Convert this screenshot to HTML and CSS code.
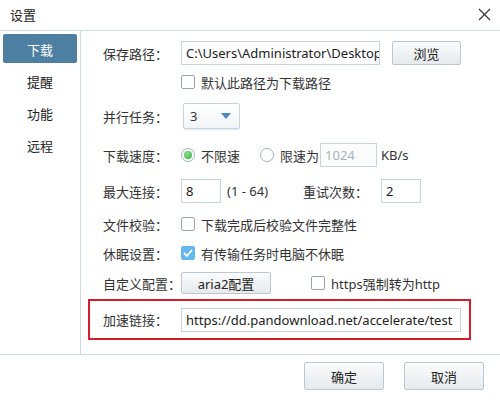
FILE: index.html
```html
<!DOCTYPE html>
<html lang="zh-CN">
<head>
<meta charset="utf-8">
<title>设置</title>
<link rel="stylesheet" href="styles.css">
</head>
<body>
<div class="dialog">
  <div class="titlebar">
    <span class="title">设置</span>
    <svg class="close" width="13" height="13" viewBox="0 0 13 13"><path d="M1 1 L12 12 M12 1 L1 12" stroke="#333" stroke-width="1.2" fill="none"/></svg>
  </div>
  <div class="main">
    <nav class="sidebar">
      <div class="nav-item active">下载</div>
      <div class="nav-item">提醒</div>
      <div class="nav-item">功能</div>
      <div class="nav-item">远程</div>
    </nav>
    <div class="content">
      <div class="row r1">
        <span class="label">保存路径：</span>
        <div class="input path">C:\Users\Administrator\Desktop</div>
        <div class="btn browse">浏览</div>
      </div>
      <div class="row r2">
        <span class="label"></span>
        <span class="checkbox"></span><span class="ctext">默认此路径为下载路径</span>
      </div>
      <div class="row r3">
        <span class="label">并行任务：</span>
        <div class="select"><span>3</span><svg width="10" height="6" viewBox="0 0 10 6"><path d="M0 0 H10 L5 6 Z" fill="#4a8bc4"/></svg></div>
      </div>
      <div class="row r4">
        <span class="label">下载速度：</span>
        <span class="radio on"></span><span class="ctext">不限速</span>
        <span class="radio r-second"></span><span class="ctext">限速为</span>
        <div class="input limit disabled">1024</div>
        <span class="unit">KB/s</span>
      </div>
      <div class="row r5">
        <span class="label">最大连接：</span>
        <div class="input small">8</div>
        <span class="range">(1 - 64)</span>
        <span class="label retry">重试次数：</span>
        <div class="input small">2</div>
      </div>
      <div class="row r6">
        <span class="label">文件校验：</span>
        <span class="checkbox"></span><span class="ctext">下载完成后校验文件完整性</span>
      </div>
      <div class="row r7">
        <span class="label">休眠设置：</span>
        <span class="checkbox checked"><svg width="10" height="8" viewBox="0 0 10 8"><path d="M1 4 L4 7 L9 1" stroke="#fff" stroke-width="1.8" fill="none"/></svg></span><span class="ctext">有传输任务时电脑不休眠</span>
      </div>
      <div class="row r8">
        <span class="label">自定义配置：</span>
        <div class="btn aria">aria2配置</div>
        <span class="checkbox cb-https"></span><span class="ctext">https强制转为http</span>
      </div>
      <div class="accel">
        <span class="label">加速链接：</span>
        <div class="input url">https://dd.pandownload.net/accelerate/test</div>
      </div>
    </div>
  </div>
  <div class="footer">
    <div class="btn action">确定</div>
    <div class="btn action">取消</div>
  </div>
</div>
</body>
</html>
```
FILE: styles.css
```css
* { box-sizing: border-box; }
html, body { margin: 0; padding: 0; background: #fff; }
body {
  font-family: "Noto Sans", "Noto Sans CJK SC", sans-serif;
  font-size: 13px;
  color: #333;
}
.dialog { width: 500px; height: 400px; display: flex; flex-direction: column; }
.titlebar {
  height: 31px;
  border-bottom: 1px solid #cfd9e0;
  display: flex;
  align-items: center;
  justify-content: space-between;
  padding: 0 9px 2px 10px;
}
.title { font-size: 13px; color: #222; }
.main { height: 324px; display: flex; border-bottom: 1px solid #cfd9e0; }
.sidebar {
  width: 81px;
  border-right: 1px solid #cfd9e0;
  padding: 3px 3px 0 3px;
}
.nav-item {
  height: 29px;
  margin-bottom: 3px;
  padding-top: 2px;
  display: flex;
  align-items: center;
  justify-content: center;
  color: #222;
  border-radius: 2px;
}
.nav-item.active { background: #4c7fa2; color: #fff; }
.content { flex: 1; padding: 10px 0 0 22px; }
.row { display: flex; align-items: center; }
.label { width: 78px; flex: none; color: #333; }
.input {
  border: 1px solid #c9d5de;
  height: 24px;
  line-height: 22px;
  padding: 0 4px;
  white-space: nowrap;
  overflow: hidden;
  color: #222;
  background: #fff;
}
.path { width: 199px; font-size: 13px; }
.btn {
  border: 1px solid #bcc7cf;
  border-radius: 2px;
  background: linear-gradient(#fafbfc, #e6eaed);
  display: flex;
  align-items: center;
  justify-content: center;
  color: #222;
}
.browse { width: 69px; height: 24px; margin-left: 12px; }
.r2 { height: 20px; margin-top: 7px; }
.checkbox {
  width: 14px; height: 14px;
  border: 1px solid #9aa4ab;
  border-radius: 2px;
  background: #fff;
  flex: none;
  display: flex;
  align-items: center;
  justify-content: center;
}
.checkbox.checked { background: #65b7ef; border-color: #65b7ef; }
.ctext { margin-left: 6px; }
.r3 { height: 26px; margin-top: 11px; }
.select {
  width: 57px; height: 26px;
  margin-left: 2px;
  border: 1px solid #c9d5de;
  border-radius: 2px;
  background: linear-gradient(#fff, #f1f4f6);
  box-shadow: 0 1px 1px rgba(0,0,0,0.08);
  display: flex;
  align-items: center;
  justify-content: space-between;
  padding: 0 8px 0 6px;
}
.r4 { height: 24px; margin-top: 14px; }
.radio {
  width: 14px; height: 14px;
  border: 1px solid #9fb0bd;
  border-radius: 50%;
  background: #fff;
  flex: none;
  position: relative;
}
.radio.on::after {
  content: "";
  position: absolute;
  left: 2px; top: 2px;
  width: 8px; height: 8px;
  border-radius: 50%;
  background: radial-gradient(circle at 40% 35%, #8de08a, #2fae3a);
}
.r-second { margin-left: 20px; }
.limit { width: 57px; margin-left: 1px; }
.disabled { color: #aab2b8; background: #fbfcfc; }
.unit { margin-left: 4px; }
.r5 { height: 24px; margin-top: 12px; }
.small { width: 40px; }
.range { margin-left: 6px; width: 76px; }
.retry { width: 78px; }
.r6 { height: 20px; margin-top: 11px; }
.r7 { height: 20px; margin-top: 9px; }
.r8 { height: 22px; margin-top: 9px; }
.aria { width: 90px; height: 22px; }
.cb-https { margin-left: 40px; }
.accel {
  margin: 5px 0 0 -15px;
  width: 383px;
  height: 41px;
  border: 2px solid #d21f2b;
  display: flex;
  align-items: center;
  padding-left: 13px;
}
.url { width: 280px; height: 24px; font-size: 13px; }
.footer {
  flex: 1;
  display: flex;
  justify-content: flex-end;
  gap: 20px;
  padding: 7px 16px 0 0;
}
.action { width: 80px; height: 28px; }
```
